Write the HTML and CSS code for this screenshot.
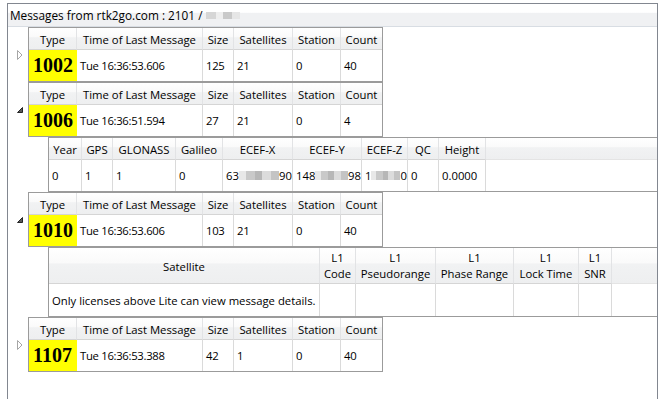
FILE: index.html
```html
<!DOCTYPE html>
<html lang="en">
<head>
    <meta charset="UTF-8">
    <title>Messages</title>
    <link rel="stylesheet" href="styles.css">
</head>
<body>
    <div class="panel">
        <div class="panel-title">Messages from rtk2go.com : 2101 / <span class="blur blur-title"></span></div>

        <div class="msg">
            <div class="expander">
                <svg width="6" height="10" viewBox="0 0 6 10"><polygon points="0.5,0.5 5,5 0.5,9.5" fill="#fff" stroke="#a6a6a6"/></svg>
            </div>
            <div class="grid msg-grid">
                <div class="hd">Type</div>
                <div class="hd">Time of Last Message</div>
                <div class="hd">Size</div>
                <div class="hd">Satellites</div>
                <div class="hd">Station</div>
                <div class="hd">Count</div>
                <div class="cell type-cell">1002</div>
                <div class="cell">Tue 16:36:53.606</div>
                <div class="cell">125</div>
                <div class="cell">21</div>
                <div class="cell">0</div>
                <div class="cell">40</div>
            </div>
        </div>

        <div class="msg">
            <div class="expander">
                <svg width="6" height="6" viewBox="0 0 6 6"><polygon points="5.5,0.5 5.5,5.5 0.5,5.5" fill="#595959" stroke="#262626"/></svg>
            </div>
            <div class="grid msg-grid">
                <div class="hd">Type</div>
                <div class="hd">Time of Last Message</div>
                <div class="hd">Size</div>
                <div class="hd">Satellites</div>
                <div class="hd">Station</div>
                <div class="hd">Count</div>
                <div class="cell type-cell">1006</div>
                <div class="cell">Tue 16:36:51.594</div>
                <div class="cell">27</div>
                <div class="cell">21</div>
                <div class="cell">0</div>
                <div class="cell">4</div>
            </div>
        </div>
        <div class="detail">
            <div class="grid station-grid">
                <div class="hd">Year</div>
                <div class="hd">GPS</div>
                <div class="hd">GLONASS</div>
                <div class="hd">Galileo</div>
                <div class="hd">ECEF-X</div>
                <div class="hd">ECEF-Y</div>
                <div class="hd">ECEF-Z</div>
                <div class="hd">QC</div>
                <div class="hd">Height</div>
                <div class="hd filler"></div>
                <div class="cell">0</div>
                <div class="cell">1</div>
                <div class="cell">1</div>
                <div class="cell">0</div>
                <div class="cell">63<span class="blur blur-x"></span>90</div>
                <div class="cell">148<span class="blur blur-y"></span>98</div>
                <div class="cell">1<span class="blur blur-z"></span>0</div>
                <div class="cell">0</div>
                <div class="cell">0.0000</div>
                <div class="cell filler"></div>
            </div>
        </div>

        <div class="msg">
            <div class="expander">
                <svg width="6" height="6" viewBox="0 0 6 6"><polygon points="5.5,0.5 5.5,5.5 0.5,5.5" fill="#595959" stroke="#262626"/></svg>
            </div>
            <div class="grid msg-grid">
                <div class="hd">Type</div>
                <div class="hd">Time of Last Message</div>
                <div class="hd">Size</div>
                <div class="hd">Satellites</div>
                <div class="hd">Station</div>
                <div class="hd">Count</div>
                <div class="cell type-cell">1010</div>
                <div class="cell">Tue 16:36:53.606</div>
                <div class="cell">103</div>
                <div class="cell">21</div>
                <div class="cell">0</div>
                <div class="cell">40</div>
            </div>
        </div>
        <div class="detail">
            <div class="grid sat-grid">
                <div class="hd">Satellite</div>
                <div class="hd two"><span>L1</span><span>Code</span></div>
                <div class="hd two"><span>L1</span><span>Pseudorange</span></div>
                <div class="hd two"><span>L1</span><span>Phase Range</span></div>
                <div class="hd two"><span>L1</span><span>Lock Time</span></div>
                <div class="hd two"><span>L1</span><span>SNR</span></div>
                <div class="hd filler"></div>
                <div class="cell">Only licenses above Lite can view message details.</div>
                <div class="cell"></div>
                <div class="cell"></div>
                <div class="cell"></div>
                <div class="cell"></div>
                <div class="cell"></div>
                <div class="cell filler"></div>
            </div>
        </div>

        <div class="msg">
            <div class="expander">
                <svg width="6" height="10" viewBox="0 0 6 10"><polygon points="0.5,0.5 5,5 0.5,9.5" fill="#fff" stroke="#a6a6a6"/></svg>
            </div>
            <div class="grid msg-grid">
                <div class="hd">Type</div>
                <div class="hd">Time of Last Message</div>
                <div class="hd">Size</div>
                <div class="hd">Satellites</div>
                <div class="hd">Station</div>
                <div class="hd">Count</div>
                <div class="cell type-cell">1107</div>
                <div class="cell">Tue 16:36:53.388</div>
                <div class="cell">42</div>
                <div class="cell">1</div>
                <div class="cell">0</div>
                <div class="cell">40</div>
            </div>
        </div>
    </div>
</body>
</html>
```

FILE: styles.css
```css
body {
    margin: 0;
    background: #fff;
    font-family: "Open Sans", "Noto Sans", sans-serif;
    font-size: 11.3px;
    color: #000;
}
.panel {
    box-sizing: border-box;
    margin: 3px 0 0 7px;
    width: 651px;
    height: 396px;
    border: 1px solid #828790;
    border-bottom: none;
    overflow: hidden;
}
.panel-title {
    height: 22px;
    line-height: 22px;
    padding-left: 2px;
    font-size: 11.8px;
    border-bottom: 1px solid #d8dde3;
    background: linear-gradient(#ffffff 0, #ffffff 38%, #f0f1f3 42%, #f0f1f3 100%);
    white-space: nowrap;
}
.blur {
    display: inline-block;
    height: 9px;
    vertical-align: -1px;
    background: linear-gradient(to right, #e8e8e8 0 18%, #c9c9c9 18% 40%, #b7b7b7 40% 58%, #dcdcdc 58% 80%, #c4c4c4 80% 100%);
}
.blur-title {
    width: 34px;
    height: 7px;
    vertical-align: 1px;
    background: linear-gradient(to right, #d6d6d6 0 30%, #eeeeee 30% 50%, #c9c9c9 50% 75%, #e6e6e6 75% 100%);
}
.blur-x { width: 40px; }
.blur-y { width: 40px; }
.blur-z { width: 29px; }
.msg {
    display: flex;
    align-items: center;
}
.expander {
    width: 20px;
    box-sizing: border-box;
    padding-left: 9px;
    display: flex;
    align-items: center;
}
.expander svg {
    display: block;
}
.grid {
    display: grid;
    border: 1px solid #9b9b9b;
}
.msg-grid {
    grid-template-columns: 48px 126px 31px 59px 48px 41px;
    grid-template-rows: 22px 31px;
}
.msg-grid .cell {
    letter-spacing: -0.3px;
}
.detail {
    margin-left: 40px;
}
.detail .grid {
    border-right: none;
}
.station-grid {
    grid-template-columns: 33px 31px 63px 47px 70px 69px 46px 31px 47px 1fr;
    grid-template-rows: 22px 31px;
}
.sat-grid {
    grid-template-columns: 271px 36px 80px 78px 65px 33px 1fr;
    grid-template-rows: 36px 32px;
}
.hd {
    box-sizing: border-box;
    display: flex;
    align-items: center;
    justify-content: center;
    text-align: center;
    line-height: 15px;
    padding-top: 1px;
    white-space: nowrap;
    border-right: 1px solid #e2e3e5;
    border-bottom: 1px solid #d5d5d5;
    background: linear-gradient(#ffffff 0, #fafafa 42%, #f1f2f3 46%, #eeeff0 100%);
}
.hd.two {
    flex-direction: column;
    line-height: 16px;
    padding-top: 0;
}
.hd:last-child,
.msg-grid .hd:nth-child(6) {
    border-right: none;
}
.cell {
    box-sizing: border-box;
    display: flex;
    align-items: center;
    padding-left: 3px;
    white-space: nowrap;
    border-right: 1px solid #dadada;
}
.msg-grid .cell:last-child {
    border-right: none;
}
.cell.filler {
    border-right: none;
}
.hd.filler {
    border-right: none;
    border-bottom-color: #e4e4e4;
}
.msg-grid .type-cell {
    background: #ffff00;
    font-family: "Liberation Serif", serif;
    font-weight: bold;
    font-size: 20px;
    letter-spacing: 0;
    padding-left: 4px;
    border-right-color: #ffff00;
}
```
